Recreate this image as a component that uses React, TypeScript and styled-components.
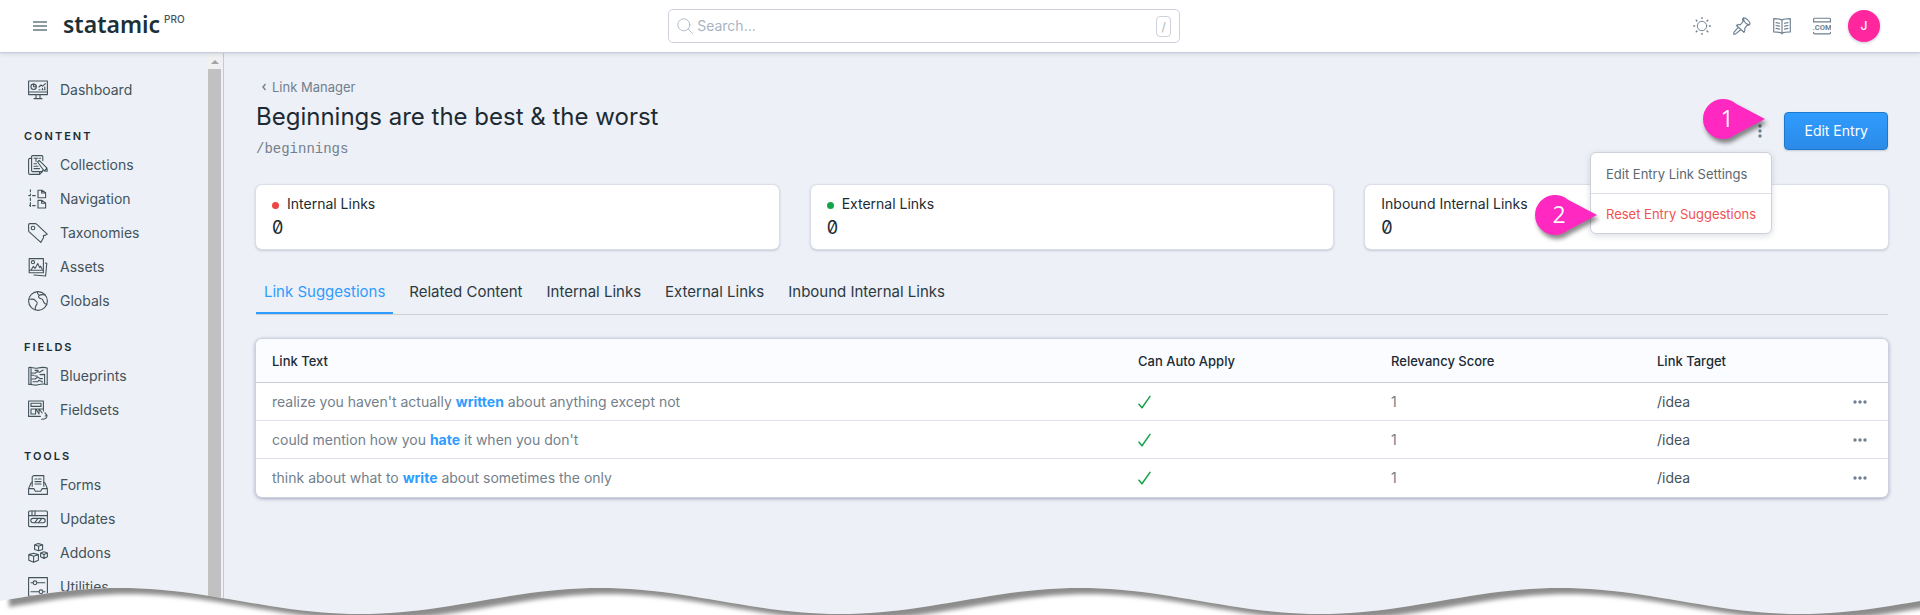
import React from "react";
import styled, { createGlobalStyle } from "styled-components";

const GlobalStyle = createGlobalStyle`
  *, *::before, *::after { box-sizing: border-box; }
  body {
    margin: 0;
    background: #edf0f6;
    color: #1c2b33;
    font-family: Inter, "Liberation Sans", sans-serif;
    font-size: 14px;
    line-height: 20px;
  }
  button, input { font: inherit; color: inherit; }
  a { color: inherit; text-decoration: none; }
`;

const Shell = styled.div`
  position: relative;
  display: flex;
  flex-direction: column;
  min-height: 100vh;
  overflow: hidden;
`;

/* ---------- top bar ---------- */

const TopBar = styled.header`
  position: relative;
  display: grid;
  grid-template-columns: 10fr minmax(0, 512px) 11fr;
  align-items: center;
  height: 53px;
  padding: 0 40px 0 32px;
  background: #fff;
  border-bottom: 1px solid #c8cdde;
  box-shadow: 0 1px 4px rgba(60, 70, 110, 0.18);
`;

const Brand = styled.div`
  display: flex;
  align-items: center;
  gap: 16px;
`;

const PlainButton = styled.button`
  display: inline-flex;
  align-items: center;
  justify-content: center;
  padding: 0;
  border: 0;
  background: none;
  cursor: pointer;
`;

const Wordmark = styled.a`
  display: flex;
  align-items: flex-start;
  gap: 4px;
  margin-bottom: 4px;
  color: #1b3038;
  font-family: "Noto Sans", "Open Sans", sans-serif;
  font-size: 23px;
  font-weight: 600;
  line-height: 28px;
`;

const Edition = styled.span`
  padding-top: 1px;
  color: #43535b;
  font-family: Inter, sans-serif;
  font-size: 10px;
  font-weight: 500;
  line-height: 16px;
`;

const SearchBox = styled.label`
  display: flex;
  align-items: center;
  gap: 4px;
  height: 34px;
  padding: 0 8px;
  border: 1px solid #cdd1de;
  border-radius: 5px;
  color: #a9b5c3;
`;

const SearchInput = styled.input`
  flex: 1;
  min-width: 0;
  padding: 0;
  border: 0;
  outline: 0;
  background: none;
  font-size: 14px;
  &::placeholder { color: #a9b5c3; opacity: 1; }
`;

const Key = styled.kbd`
  width: 15px;
  height: 21px;
  border: 1px solid #cdd1de;
  border-radius: 4px;
  font-family: inherit;
  font-size: 12px;
  line-height: 19px;
  text-align: center;
`;

const Tools = styled.div`
  display: flex;
  align-items: center;
  justify-content: flex-end;
  color: #6f8090;
`;

const ToolButton = styled(PlainButton)`
  width: 40px;
  height: 40px;
`;

const Avatar = styled(PlainButton)`
  width: 32px;
  height: 32px;
  margin-left: 6px;
  border-radius: 50%;
  background: #ff269e;
  color: #fff;
  font-size: 12px;
  font-weight: 500;
  box-shadow: 0 1px 3px rgba(60, 70, 110, 0.3);
`;

/* ---------- side navigation ---------- */

const Body = styled.div`
  display: flex;
  flex: 1;
`;

const Sidebar = styled.aside`
  display: flex;
  flex: 0 0 224px;
  border-right: 1px solid #c6c9cf;
`;

const Nav = styled.nav`
  flex: 1;
  padding: 20px 0 8px 24px;
`;

const NavHeading = styled.h2`
  margin: 0;
  padding: 20px 0 3px;
  color: #1c2b33;
  font-size: 11px;
  font-weight: 600;
  line-height: 18px;
  letter-spacing: 2px;
  text-transform: uppercase;
`;

const NavList = styled.ul`
  margin: 0;
  padding: 0;
  list-style: none;
`;

const NavLink = styled.a`
  display: flex;
  align-items: center;
  gap: 12px;
  height: 34px;
  padding-left: 4px;
  color: #43535b;
`;

const ScrollTrack = styled.div`
  display: flex;
  flex-direction: column;
  align-items: center;
  width: 15px;
  margin-right: 1px;
  background: #f1f1f1;
`;

const ScrollArrow = styled.span`
  margin: 7px 0 5px;
  border: 4px solid transparent;
  border-top-width: 0;
  border-bottom-color: #a3a3a3;
`;

const ScrollThumb = styled.span`
  flex: 1;
  width: 13px;
  background: #c1c1c1;
`;

/* ---------- main area ---------- */

const Main = styled.main`
  flex: 1;
  min-width: 0;
  padding: 24px 32px 32px;
`;

const Crumb = styled.a`
  display: flex;
  align-items: center;
  gap: 6px;
  width: fit-content;
  padding-left: 6px;
  color: #737f8c;
  font-size: 13px;
`;

const PageHeader = styled.header`
  display: flex;
  align-items: center;
  justify-content: space-between;
  margin-bottom: 24px;
`;

const Title = styled.h1`
  margin: 0;
  font-size: 24px;
  font-weight: 400;
  line-height: 40px;
`;

const Slug = styled.div`
  color: #737f8c;
  font-family: "Liberation Mono", monospace;
  font-size: 14px;
  line-height: 24px;
`;

const Actions = styled.div`
  position: relative;
  display: flex;
  align-items: center;
  gap: 16px;
  padding-top: 4px;
`;

const KebabButton = styled(PlainButton)`
  width: 16px;
  height: 32px;
  color: #6f8090;
`;

const PrimaryButton = styled.button`
  height: 38px;
  padding: 0 19px;
  border: 1px solid #1c78cc;
  border-radius: 4px;
  background: linear-gradient(#2f9cff, #2b8ae6);
  color: #fff;
  font-size: 14px;
  box-shadow: 0 1px 2px rgba(30, 50, 90, 0.2);
  cursor: pointer;
`;

const Menu = styled.div`
  position: absolute;
  top: 44px;
  right: 116px;
  z-index: 2;
  width: 182px;
  border: 1px solid #cdd1d9;
  border-radius: 6px;
  background: #fff;
  box-shadow: 0 2px 6px rgba(60, 70, 110, 0.18);
`;

const MenuItem = styled.button<{ $danger?: boolean }>`
  display: block;
  width: 100%;
  height: 40px;
  padding: 2px 15px 0;
  border: 0;
  background: none;
  color: ${(p) => (p.$danger ? "#f05252" : "#5b6870")};
  font-size: 13px;
  text-align: left;
  white-space: nowrap;
  cursor: pointer;
  & + & { padding-top: 0; border-top: 1px solid #dcdfe6; }
`;

const Callout = styled.svg<{ $top: number; $right: number }>`
  position: absolute;
  top: ${(p) => p.$top}px;
  right: ${(p) => p.$right}px;
  z-index: 3;
  overflow: visible;
  pointer-events: none;
  filter: drop-shadow(2px 4px 2px rgba(0, 0, 0, 0.45));
`;

const Stats = styled.section`
  display: grid;
  grid-template-columns: repeat(3, minmax(0, 1fr));
  gap: 32px;
`;

const StatCard = styled.div`
  padding: 7px 16px 9px;
  border-radius: 6px;
  background: #fff;
  box-shadow: 0 0 0 1px #dadeea, 0 1px 3px rgba(60, 70, 110, 0.45);
`;

const StatLabel = styled.div`
  display: flex;
  align-items: center;
  gap: 8px;
  line-height: 24px;
`;

const Dot = styled.span<{ $color: string }>`
  width: 7px;
  height: 7px;
  margin-top: 2px;
  border-radius: 50%;
  background: ${(p) => p.$color};
`;

const StatValue = styled.div`
  font-size: 18px;
  font-feature-settings: "zero";
  line-height: 24px;
`;

const Tabs = styled.div`
  display: flex;
  gap: 8px;
  margin: 24px 0;
  border-bottom: 1px solid #ccd0da;
`;

const Tab = styled.button<{ $active?: boolean }>`
  height: 41px;
  padding: 0 8px 2px;
  border: 0;
  border-bottom: 2px solid ${(p) => (p.$active ? "#2f9cff" : "transparent")};
  background: none;
  color: ${(p) => (p.$active ? "#2f9cff" : "#2b3a42")};
  font-size: 15px;
  white-space: nowrap;
  cursor: pointer;
`;

const TableCard = styled.div`
  overflow: hidden;
  border-radius: 6px;
  background: #fff;
  box-shadow: 0 0 0 1px #cdd1e0, 0 1px 4px rgba(60, 60, 110, 0.6);
`;

const Table = styled.table`
  width: 100%;
  border-collapse: separate;
  border-spacing: 0;
  table-layout: fixed;
`;

const Th = styled.th<{ $width?: string }>`
  width: ${(p) => p.$width ?? "auto"};
  height: 44px;
  padding: 0 16px;
  border-bottom: 1px solid #c9cdda;
  background: #fafcff;
  font-size: 13px;
  font-weight: 500;
  text-align: left;
`;

const Td = styled.td`
  height: 38px;
  padding: 0 16px;
  color: #737f8c;
  tr:not(:last-child) > & { border-bottom: 1px solid #dde2ec; }
  svg { display: block; }
`;

const Keyword = styled.b`
  color: #2f9cff;
  font-weight: 700;
`;

const Target = styled.a`
  color: #43535b;
`;

const RowEnd = styled.div`
  display: flex;
  align-items: center;
  justify-content: space-between;
  padding-right: 5px;
`;

const TornEdge = styled.svg`
  position: absolute;
  bottom: 0;
  left: 0;
  z-index: 4;
  width: 100%;
  height: 28px;
  pointer-events: none;
`;

/* ---------- drawings ---------- */

const Icon = ({ size = 20, children }: { size?: number; children: React.ReactNode }) => (
  <svg
    width={size}
    height={size}
    viewBox="0 0 20 20"
    fill="none"
    stroke="currentColor"
    strokeWidth="1.1"
    strokeLinecap="round"
    strokeLinejoin="round"
    aria-hidden="true"
  >
    {children}
  </svg>
);

const glyphs: Record<string, React.ReactNode> = {
  Dashboard: (
    <>
      <path d="M.6 1h18.8v13.6H.6zM.6 12h18.8M8 14.6v3.6M12 14.6v3.6M6 18.6h8" />
      <circle cx="5.6" cy="6.8" r="2.7" />
      <path d="M5.6 4.1v2.7h2.7M11 7l2-2 1.6 1.2L17.400 3.600M11 9.800h1M14 9.800h1M16.500 9.800h.6M14.500 8.400v1.400M16.800 7v2.800" />
    </>
  ),
  Collections: (
    <>
      <path d="M3.600 3.400H2A1.400 1.400 0 0 0 .6 4.800v13.200a1.400 1.400 0 0 0 1.400 1.400h9.600l3-3" />
      <path d="M14.800 5.400V1.600a1 1 0 0 0-1-1H4.600a1 1 0 0 0-1 1v14a1 1 0 0 0 1 1h9.800v-1.400" />
      <path d="M6 3.200h4M8 3.200V6.400M11.600 3.200h1M6 8.800h2.500M6 11.200h4M6 13.600h5.500" />
      <path d="m9.600 7 1.600-1.600 7.800 7.800.2 3-3-.2zM16.200 16l2.800-2.800M11.600 19.400v-2.800" />
    </>
  ),
  Navigation: (
    <>
      <path d="M2.400.8v2M2.400 5v1.600M2.400 9v2.400M2.400 13.500v2M4.600 6.600h2.600M4.600 16.600h2.600M1.600 16.400h.8v1M.8 6.600h1.600" />
      <path d="M10 1.200h4l3.600 2.600v5H10zM13.600 1.200v2.800h4M10 11.400h4l3.600 2.600v5H10zM13.600 11.400v2.800h4" />
    </>
  ),
  Taxonomies: (
    <>
      <path d="M1.800.6h5.400a2 2 0 0 1 1.400.6l10.600 10-2.600 1.200-1.200.2.200 1.800-2.800 5L1.200 8.800A2 2 0 0 1 .6 7.400V1.800A1.200 1.200 0 0 1 1.800.6Z" />
      <circle cx="5" cy="5" r="1.800" />
    </>
  ),
  Assets: (
    <>
      <path d="M1.200 1.600h14.200v14.200H1.200zM1.200 13.200h14.200" />
      <circle cx="5" cy="5.200" r="1.600" />
      <path d="m3.200 12.800 2.200-3.400 1.600 2 2.800-5 1.800 4.200 1-1.400 1.600 3M17.200 6l1.600.2-1.200 12.800L6 18" />
    </>
  ),
  Globals: (
    <>
      <circle cx="10" cy="10" r="9.400" />
      <path d="M1 8.200c3 .2 4.600-.8 6 1 1 1.600 3.200 1.400 2 3.800-.8 1.400-2 1.600-1.800 5.800M17.400 4c-2.400-.6-5-.4-6.400.6-1.400 1.200.6 3 2.400 3.200 2 .4 1.600 2.600 2.600 3.800.8 1 1.800 1.400 2.800 1.600M9.400.8c-.2 1.200 0 2 1.600 3.200" />
    </>
  ),
  Blueprints: (
    <>
      <path d="M.8 1.600c3-1 4.600 1.400 9.200.4s6-1 9.200 0v16.600c-3-1-5-1-9.200.2s-6-1.200-9.200-.2zM3 1.600v16.800M3 6.800l4 .4 2.200-1.600 2.400.6 3.600-2.200M3 9.200h3M3 13h4.200l2.400-2 2.400 1.600h2.400M7 4.400h3M7 10h2M12 8.600l4.600-.2v8.800M5 15.800h4.600l1.400-1.600 3.600 1.800" />
    </>
  ),
  Fieldsets: (
    <>
      <path d="M15.400 11V1H.6v15.400h11.800M3 3.200h10v3.200H3zM3 9h4.600v5H3zM7.600 14V9h7.800M8 9l3 5V9l3.200 4" />
      <path d="m17 12.800 2 2.600M19 15.400c.2 2-1 3.800-5.400 3.800M17.200 16l1.800-.8" />
    </>
  ),
  Forms: (
    <>
      <path d="M4.200 11.200V1.800L5.600.6h10.200v10.600M7 4h1.600M7 6.600h6M7 9h6M10 4h3" />
      <path d="M4.200 7.400 3 8l-2.400 5.600v5.800h18.800v-5.800L17 8l-1.200-.6M.6 13.600h5.200l1.600 2.600h5.200l1.600-2.600h5.200" />
    </>
  ),
  Updates: (
    <>
      <rect x=".6" y="2" width="18.800" height="15.600" rx="1" />
      <path d="M.6 6.600h18.800M4 2v4.600M7 2v4.600M6.800 13.600l3-4M10.600 13.600l3-4" />
      <rect x="2.800" y="9.400" width="14.400" height="4.400" rx="2.200" />
    </>
  ),
  Addons: (
    <>
      <path d="m6.600 1.800 3.800-1.200 4.200 1.200v4.600l-4 1.400-4-1.400zM6.600 1.800l4 1.400 4-1.400M10.600 3.200v4.600" />
      <path d="m.8 11.600 4.800-1.400 4.800 1.400v5.600l-4.800 2-4.800-2zM.8 11.600l4.800 1.600 4.800-1.600M5.600 13.200v6" />
      <path d="m12.600 10 3.400-1.200 3.400 1.200v3.800L16 15.400l-3.400-1.600zM12.600 10l3.400 1.400 3.400-1.400M16 11.400v4" />
    </>
  ),
  Utilities: (
    <>
      <path d="M.6.6h18.800v18.800H.6zM3 5.800h2.200M9 5.800h7.800M3 14.800h7.800M15.200 14.800h1.800" />
      <circle cx="7" cy="5.800" r="1.900" />
      <circle cx="13" cy="14.800" r="1.900" />
    </>
  ),
};

const MenuBars = () => (
  <svg width="15" height="12" viewBox="0 0 15 12" stroke="#8b9aa0" strokeWidth="2" aria-hidden="true">
    <path d="M1 2h14M1 6h14M1 10h14" />
  </svg>
);

const Dots = ({ vertical }: { vertical?: boolean }) => (
  <svg width={vertical ? 4 : 14} height={vertical ? 14 : 4} fill="#6f8090" aria-hidden="true">
    {[2, 7, 12].map((n) => (
      <circle key={n} cx={vertical ? 2 : n} cy={vertical ? n : 2} r="1.700" />
    ))}
  </svg>
);

const Check = () => (
  <svg width="13" height="14" viewBox="0 0 13 14" fill="none" stroke="#16a34a" strokeWidth="1.500" strokeLinecap="round" strokeLinejoin="round" role="img" aria-label="Yes">
    <path d="M1 9.200 4 12.800 12 1.400" />
  </svg>
);

const Marker = ({ label, top, right }: { label: string; top: number; right: number }) => (
  <Callout $top={top} $right={right} width="62" height="40" viewBox="0 0 62 40">
    <path d="M62 20 33 4.800A20 20 0 1 0 33 35.200Z" fill="#ff28c0" />
    <text x="24" y="28" fill="#fff" fontFamily="Open Sans, sans-serif" fontSize="23" textAnchor="middle">
      {label}
    </text>
  </Callout>
);

const wave = (() => {
  const points: string[] = [];
  for (let x = 0; x <= 1920; x += 10) {
    points.push(`${x} ${(14 - 13 * Math.sin((2 * Math.PI * x) / 480)).toFixed(2)}`);
  }
  return points.join("L");
})();

const Torn = () => (
  <TornEdge viewBox="0 0 1920 28" preserveAspectRatio="none" aria-hidden="true">
    <defs>
      <clipPath id="below">
        <path d={`M${wave}V28H0Z`} />
      </clipPath>
      <filter id="soften" x="-1%" y="-50%" width="102%" height="200%">
        <feGaussianBlur stdDeviation="2" />
      </filter>
    </defs>
    <g clipPath="url(#below)">
      <path d="M0 0H1920V28H0Z" fill="#fff" />
      <g filter="url(#soften)">
        <path transform="translate(9 6)" d={`M${wave}L1960 14V-20H0Z`} fill="#8c8c8c" />
      </g>
    </g>
  </TornEdge>
);

/* ---------- data ---------- */

const groups: { title?: string; items: string[] }[] = [
  { items: ["Dashboard"] },
  { title: "Content", items: ["Collections", "Navigation", "Taxonomies", "Assets", "Globals"] },
  { title: "Fields", items: ["Blueprints", "Fieldsets"] },
  { title: "Tools", items: ["Forms", "Updates", "Addons", "Utilities"] },
];

const stats = [
  { label: "Internal Links", value: 0, color: "#ef4444" },
  { label: "External Links", value: 0, color: "#16a34a" },
  { label: "Inbound Internal Links", value: 0 },
];

const tabs = ["Link Suggestions", "Related Content", "Internal Links", "External Links", "Inbound Internal Links"];

const suggestions = [
  { before: "realize you haven't actually ", word: "written", after: " about anything except not" },
  { before: "could mention how you ", word: "hate", after: " it when you don't" },
  { before: "think about what to ", word: "write", after: " about sometimes the only" },
];

export default function App() {
  return (
    <Shell>
      <GlobalStyle />
      <TopBar>
        <Brand>
          <PlainButton aria-label="Toggle navigation">
            <MenuBars />
          </PlainButton>
          <Wordmark href="#">
            statamic
            <Edition>PRO</Edition>
          </Wordmark>
        </Brand>
        <SearchBox>
          <Icon size={16}>
            <circle cx="8.500" cy="8.500" r="7.500" />
            <path d="m14 14 5.400 5.400" />
          </Icon>
          <SearchInput type="text" placeholder="Search..." aria-label="Search" />
          <Key>/</Key>
        </SearchBox>
        <Tools>
          <ToolButton aria-label="Theme">
            <Icon size={18}>
              <circle cx="10" cy="10" r="5.200" />
              <path d="M10 .8v1M10 18.200v1M.8 10h1M18.200 10h1M3.600 3.600l.7.7M15.700 15.700l.7.7M3.600 16.400l.7-.7M15.700 4.300l.7-.7" strokeWidth="1.600" />
            </Icon>
          </ToolButton>
          <ToolButton aria-label="Pin to favorites">
            <Icon size={18}>
              <path d="M11.200 1.200c2.400-1.400 8.600 4.400 7.400 7.200-.6 1-2.400.8-3 .8l-2.600 3.400c.4 1.600.2 3.200-.8 4.400L3.800 9.400c1.200-1 2.800-1.200 4.400-.8l3-3.600c-.4-1.200-1-2.800 0-3.800ZM5.800 11.400 1 17.200l-.2 2 1.800-.2 6-4.800M11.600 1.800c.4 3 3 6 6.600 7" strokeWidth="1.300" />
            </Icon>
          </ToolButton>
          <ToolButton aria-label="Documentation">
            <Icon size={18}>
              <path d="M10 3.400C7.500 1.800 4 1.800.8 1.800v14.800c3.200 0 6.700 0 9.200 1.600 2.500-1.600 6-1.600 9.200-1.600V1.800c-3.200 0-6.700 0-9.200 1.600ZM10 3.400v15.400M3.400 6.200l3.800.8M3.400 9.400l3.800.8M3.400 12.600l3.800.8M16.600 6.200l-3.800.8M16.600 9.400l-3.800.8M16.600 12.600l-3.800.8" strokeWidth="1.300" />
            </Icon>
          </ToolButton>
          <ToolButton aria-label="View site">
            <Icon size={18}>
              <path d="M.6 5.400V2.600a1.200 1.200 0 0 1 1.200-1.200h16.400a1.200 1.200 0 0 1 1.200 1.200v2.800zM.6 17v.6a1.200 1.200 0 0 0 1.200 1.200h16.400a1.200 1.200 0 0 0 1.200-1.200V17" strokeWidth="1.300" />
              <text x="10" y="14.600" fontFamily="Roboto, sans-serif" fontSize="8.500" fontWeight="700" textAnchor="middle" fill="currentColor" stroke="none">
                .COM
              </text>
            </Icon>
          </ToolButton>
          <Avatar aria-label="Account">J</Avatar>
        </Tools>
      </TopBar>

      <Body>
        <Sidebar>
          <Nav>
            {groups.map((group) => (
              <React.Fragment key={group.items[0]}>
                {group.title && <NavHeading>{group.title}</NavHeading>}
                <NavList>
                  {group.items.map((item) => (
                    <li key={item}>
                      <NavLink href="#">
                        <Icon>{glyphs[item]}</Icon>
                        {item}
                      </NavLink>
                    </li>
                  ))}
                </NavList>
              </React.Fragment>
            ))}
          </Nav>
          <ScrollTrack aria-hidden="true">
            <ScrollArrow />
            <ScrollThumb />
          </ScrollTrack>
        </Sidebar>

        <Main>
          <Crumb href="#">
            <svg width="4" height="8" viewBox="0 0 4 8" fill="none" stroke="currentColor" strokeWidth="1.400" aria-hidden="true">
              <path d="M3.500 1 1 4l2.500 3" />
            </svg>
            Link Manager
          </Crumb>
          <PageHeader>
            <div>
              <Title>Beginnings are the best &amp; the worst</Title>
              <Slug>/beginnings</Slug>
            </div>
            <Actions>
              <KebabButton aria-label="More actions">
                <Dots vertical />
              </KebabButton>
              <PrimaryButton>Edit Entry</PrimaryButton>
              <Menu>
                <MenuItem>Edit Entry Link Settings</MenuItem>
                <MenuItem $danger>Reset Entry Suggestions</MenuItem>
              </Menu>
              <Marker label="1" top={-9} right={123} />
              <Marker label="2" top={87} right={291} />
            </Actions>
          </PageHeader>

          <Stats>
            {stats.map((stat) => (
              <StatCard key={stat.label}>
                <StatLabel>
                  {stat.color && <Dot $color={stat.color} />}
                  {stat.label}
                </StatLabel>
                <StatValue>{stat.value}</StatValue>
              </StatCard>
            ))}
          </Stats>

          <Tabs role="tablist">
            {tabs.map((tab, i) => (
              <Tab key={tab} role="tab" aria-selected={i === 0} $active={i === 0}>
                {tab}
              </Tab>
            ))}
          </Tabs>

          <TableCard>
            <Table>
              <thead>
                <tr>
                  <Th>Link Text</Th>
                  <Th $width="253px">Can Auto Apply</Th>
                  <Th $width="266px">Relevancy Score</Th>
                  <Th $width="247px">Link Target</Th>
                </tr>
              </thead>
              <tbody>
                {suggestions.map((row) => (
                  <tr key={row.word}>
                    <Td>
                      {row.before}
                      <Keyword>{row.word}</Keyword>
                      {row.after}
                    </Td>
                    <Td>
                      <Check />
                    </Td>
                    <Td>1</Td>
                    <Td>
                      <RowEnd>
                        <Target href="#">/idea</Target>
                        <PlainButton aria-label="Row actions">
                          <Dots />
                        </PlainButton>
                      </RowEnd>
                    </Td>
                  </tr>
                ))}
              </tbody>
            </Table>
          </TableCard>
        </Main>
      </Body>
      <Torn />
    </Shell>
  );
}
